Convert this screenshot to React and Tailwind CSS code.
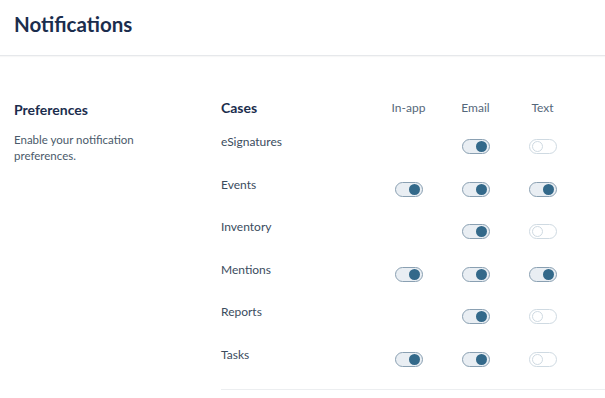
import { useState } from "react";

const CASES = [
  { name: "eSignatures", inApp: null, email: true, text: false },
  { name: "Events", inApp: true, email: true, text: true },
  { name: "Inventory", inApp: null, email: true, text: false },
  { name: "Mentions", inApp: true, email: true, text: true },
  { name: "Reports", inApp: null, email: true, text: false },
  { name: "Tasks", inApp: true, email: true, text: false },
];

function Toggle({ initial }) {
  const [on, setOn] = useState(initial);
  return (
    <button
      type="button"
      onClick={() => setOn(!on)}
      className={
        "mt-[7px] flex h-[15px] w-[28px] items-center rounded-full border px-[2px] " +
        (on
          ? "justify-end border-[#8aa0b2] bg-[#e9eef3]"
          : "justify-start border-[#cfdae2] bg-white")
      }
    >
      <span
        className={
          "block h-[11px] w-[11px] rounded-full " +
          (on ? "bg-[#33698a]" : "border border-[#cfdae2] bg-white")
        }
      />
    </button>
  );
}

export default function App() {
  return (
    <div
      className="min-h-[398px] w-full bg-white text-[#1b2d4d]"
      style={{ fontFamily: 'Lato, "Open Sans", sans-serif' }}
    >
      <div className="flex h-[56px] items-start border-b border-[#e6e8eb] px-[14px] pt-[8px] shadow-[0_1px_1px_rgba(0,0,0,0.03)]">
        <h1 className="text-[20.5px] font-bold leading-[32px]">Notifications</h1>
      </div>

      <div className="flex pt-[42px]">
        <div className="w-[221px] shrink-0 pl-[14px] pt-[2px]">
          <h2 className="text-[14px] font-bold leading-[20px]">Preferences</h2>
          <p className="mt-3 text-[11.5px] leading-[16px] text-[#4a5a6a]">
            Enable your notification
            <br />
            preferences.
          </p>
        </div>

        <div className="flex-1 border-b border-[#eceef0] pb-[2px]">
          <div className="grid h-[34px] grid-cols-[154px_67px_67px_67px] items-start">
            <span className="text-[14px] font-bold leading-[20px]">Cases</span>
            <span className="text-center text-[12px] leading-[20px] text-[#55677a]">In-app</span>
            <span className="text-center text-[12px] leading-[20px] text-[#55677a]">Email</span>
            <span className="text-center text-[12px] leading-[20px] text-[#55677a]">Text</span>
          </div>
          {CASES.map((c) => (
            <div
              key={c.name}
              className="grid h-[42.5px] grid-cols-[154px_67px_67px_67px] items-start"
            >
              <span className="text-[12px] leading-[20px] text-[#3b4c5e]">{c.name}</span>
              <div className="flex justify-center">
                {c.inApp !== null && <Toggle initial={c.inApp} />}
              </div>
              <div className="flex justify-center">
                <Toggle initial={c.email} />
              </div>
              <div className="flex justify-center">
                <Toggle initial={c.text} />
              </div>
            </div>
          ))}
        </div>
      </div>
    </div>
  );
}
